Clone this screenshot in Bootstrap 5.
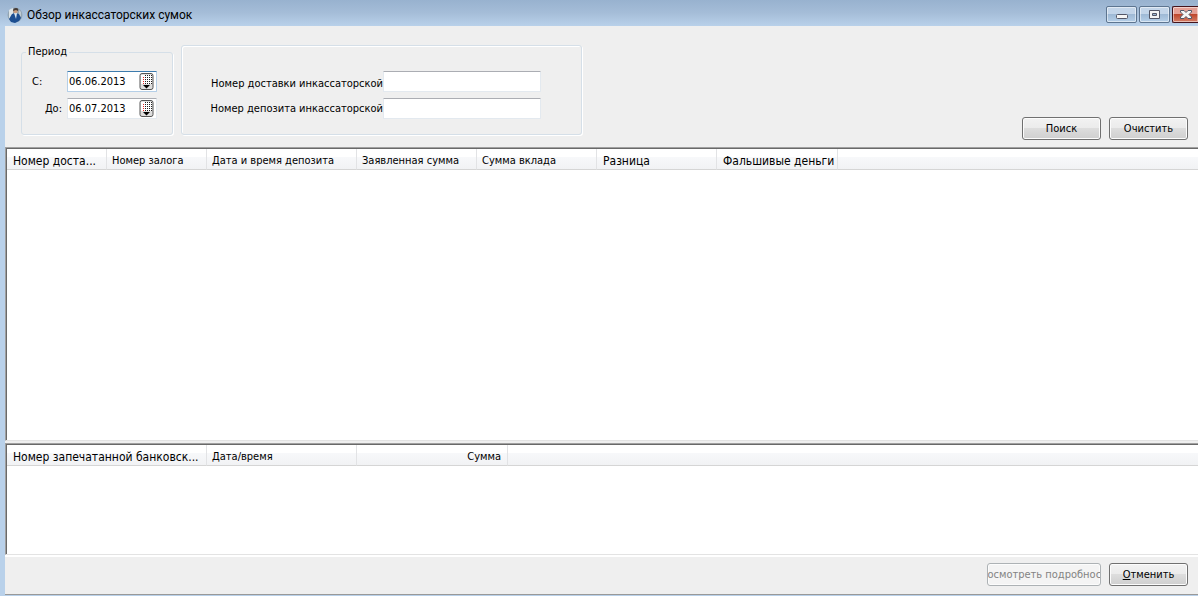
<!DOCTYPE html>
<html lang="ru">
<head>
<meta charset="utf-8">
<meta name="viewport" content="width=device-width, initial-scale=1">
<title>Обзор инкассаторских сумок</title>
<link href="https://cdn.jsdelivr.net/npm/bootstrap@5.3.0/dist/css/bootstrap.min.css" rel="stylesheet">
<style>
body{font:11px/14px "DejaVu Sans Condensed","DejaVu Sans",sans-serif;color:#000;background:#b9d1ea}
.title-bar{height:26px;padding:3px 0 0 7px;background:linear-gradient(#98b2cf,#a5bdd8 50%,#b9d1ea)}
.title-bar h1{font:12px/16px Roboto,sans-serif;padding-left:4px}
.win-buttons{gap:2px}
.win-btn{width:31px;height:17px;border:1px solid #5d7590;border-radius:2px;background:linear-gradient(#c3d5e9 45%,#9db8d4 46%,#b5cfe8);box-shadow:inset 0 0 0 1px #ffffff80}
.win-close{border-color:#44131b;background:linear-gradient(#e5a096 45%,#bd4329 46%,#d47d66);width:26px;border-radius:2px 0 0 2px;border-right:0}
.client{margin:0 0 1px 5px;background:#efefef;border-bottom:1px solid #999}
.filters{min-height:121px;padding:19px 10px 7px 16px}
.group{border:1px solid #d5dfe8;border-radius:3px;box-shadow:inset 1px 1px #fff,1px 1px #fff}
.period{width:152px;height:90px;box-shadow:1px 1px #fff}
.period legend{font:inherit;width:auto;height:14px;padding:0 2px;margin:0 0 0 4px;float:none}
.period .line{height:21px;margin-bottom:6px}
.period .line:nth-of-type(1){margin-top:12px}
.period label{width:45px;padding:0 5px 0 10px}
.search-box{width:401px;height:90px;padding-top:25px}
.search-box .line{height:21px;margin-bottom:6px}
.search-box label{width:201px;overflow:hidden;white-space:nowrap}
.field{border:1px solid #e3e9ef;border-top-color:#abadb3;border-radius:1px;background:#fff;height:21px;padding:0 2px 0 1px}
.field.current{border-color:#b5cfe7;border-top-color:#3d7bad}
input.field{width:158px}
.date{width:90px}
.date input{width:70px;border:0;padding:0;background:none;outline:0}
.drop{border:0;padding:0;background:none;line-height:0}
.push{height:23px;min-width:79px;padding:0 6px;border:1px solid #707070;border-radius:3px;background:linear-gradient(#f2f2f2,#ebebeb 49%,#dddddd 50%,#cfcfcf);box-shadow:inset 0 0 0 1px #fcfcfc;white-space:nowrap}
.push:disabled{width:114px;padding:0;color:#838383;border-color:#adb2b5;background:#f4f4f4;overflow:hidden}
.pane{background:#fff;border:1px solid #a0a0a0;border-right:0;border-bottom-color:#e3e3e3;box-shadow:inset 1px 1px #696969;padding:1px 0 0 1px}
.grid-head{table-layout:fixed;width:100%;border-collapse:separate;border-spacing:0}
.grid-head th,.grid-head td{height:21px;padding:3px 6px 0 5px;font-weight:400;white-space:nowrap;border-bottom:1px solid #d5d5d5;border-right:1px solid #e2e3e5;background:linear-gradient(#fff 40%,#f7f8fa 41%,#f1f2f4)}
.grid-head td{border-right:0}
.grid-head .wide{font-size:12px;padding:3px 0 0 6px}
.lower{height:112px;margin-top:2px}
.footer-bar{height:39px;padding:6px 10px 0 0;border-top:2px solid #fff}
</style>
</head>
<body class="vh-100 d-flex flex-column overflow-hidden">
<header class="title-bar d-flex align-items-center flex-shrink-0">
<svg width="16" height="16" viewBox="0 0 16 16" aria-hidden="true"><circle cx="8" cy="8" r="7.5" fill="#93a5b2"/><path d="M2 3a8 8 0 0 1 4-2v7L2 12z" fill="#dce4e8"/><path d="M12 3l2 2v5l-2-2z" fill="#c0cbd2"/><path d="M2 12 5 7l3-1 4 1 2 4-2 3-4 2-4-1z" fill="#1c4e91"/><path d="m7 6 2 6 1-6z" fill="#d9e7f2"/><circle cx="8.500" cy="4" r="2.300" fill="#c79b7c"/><path d="M6 4q0-3 3-3t2 3L9 3z" fill="#453b36"/></svg>
<h1 class="mb-0 me-auto">Обзор инкассаторских сумок</h1>
<div class="win-buttons d-flex">
<button class="win-btn p-0 d-flex align-items-center justify-content-center" type="button" aria-label="Свернуть"><svg class="mt-1" width="12" height="6"><rect x=".5" y=".5" width="11" height="4" rx="1" fill="#f5f5f5" stroke="#535666"/></svg></button>
<button class="win-btn p-0 d-flex align-items-center justify-content-center" type="button" aria-label="Развернуть"><svg width="11" height="9"><path d="M.5.5h10v8H.5z" fill="#f5f5f5" stroke="#535666"/><path d="M3.500 3.500h4v2h-4z" fill="#9db8d4" stroke="#535666"/></svg></button>
<button class="win-btn win-close p-0 d-flex align-items-center justify-content-center" type="button" aria-label="Закрыть"><svg width="12" height="9"><path d="M.5.5h3.500l2 2 2-2h3.500v1.500L9 4.500l2.500 2.500v1.500H8l-2-2-2 2H.5V7L3 4.500.5 2z" fill="#f5f5f5" stroke="#535666"/></svg></button>
</div>
</header>
<main class="client d-flex flex-column flex-grow-1">
<form class="filters d-flex align-items-start">
<fieldset class="group period"><legend>Период</legend>
<div class="line d-flex align-items-center"><label for="from">С:</label><div class="field current date d-flex align-items-center justify-content-between"><input id="from" value="06.06.2013"><button class="drop" type="button" aria-label="Календарь"><svg width="15" height="17"><use href="#cal"/></svg></button></div></div>
<div class="line d-flex align-items-center"><label for="to" class="text-end">До:</label><div class="field date d-flex align-items-center justify-content-between"><input id="to" value="06.07.2013"><button class="drop" type="button" aria-label="Календарь"><svg width="15" height="17"><use href="#cal"/></svg></button></div></div>
</fieldset>
<div class="group search-box ms-2">
<div class="line d-flex align-items-center"><label for="delivery" class="text-end pt-1">Номер доставки инкассаторской</label><input id="delivery" class="field"></div>
<div class="line d-flex align-items-center"><label for="deposit" class="text-end">Номер депозита инкассаторской</label><input id="deposit" class="field"></div>
</div>
<div class="d-flex gap-2 ms-auto align-self-end"><button class="push" type="submit">Поиск</button><button class="push" type="reset">Очистить</button></div>
</form>
<section class="pane flex-grow-1">
<table class="grid-head"><colgroup><col style="width:100px"><col style="width:100px"><col style="width:150px"><col style="width:120px"><col style="width:120px"><col style="width:120px"><col style="width:121px"><col></colgroup>
<thead><tr><th class="wide">Номер доста...</th><th>Номер залога</th><th>Дата и время депозита</th><th>Заявленная сумма</th><th>Сумма вклада</th><th class="wide">Разница</th><th class="wide">Фальшивые деньги</th><td></td></tr></thead></table>
</section>
<section class="pane lower">
<table class="grid-head"><colgroup><col style="width:200px"><col style="width:150px"><col style="width:151px"><col></colgroup>
<thead><tr><th class="wide">Номер запечатанной банковск...</th><th>Дата/время</th><th class="text-end">Сумма</th><td></td></tr></thead></table>
</section>
<footer class="footer-bar d-flex gap-2 justify-content-end"><button class="push d-flex justify-content-center align-items-center" type="button" disabled><span>росмотреть подробност</span></button><button class="push" type="button"><u>О</u>тменить</button></footer>
</main>
<svg width="0" height="0" class="position-absolute"><defs><g id="cal"><rect x="1" y=".5" width="13" height="16" rx="2" fill="#dedede" stroke="#555"/><path d="M2 2h11v9H2z" fill="#fff"/><path d="M6.500 2v9M8.500 2v9M10.500 2v9M12.500 2v9" stroke="#222" stroke-dasharray="1 1"/><path d="M4.500 4v7" stroke="#e22" stroke-dasharray="1 1"/><path d="M4 12h7l-3.500 3.500z"/></g></defs></svg>
<script src="https://cdn.jsdelivr.net/npm/bootstrap@5.3.0/dist/js/bootstrap.bundle.min.js"></script>
</body>
</html>
